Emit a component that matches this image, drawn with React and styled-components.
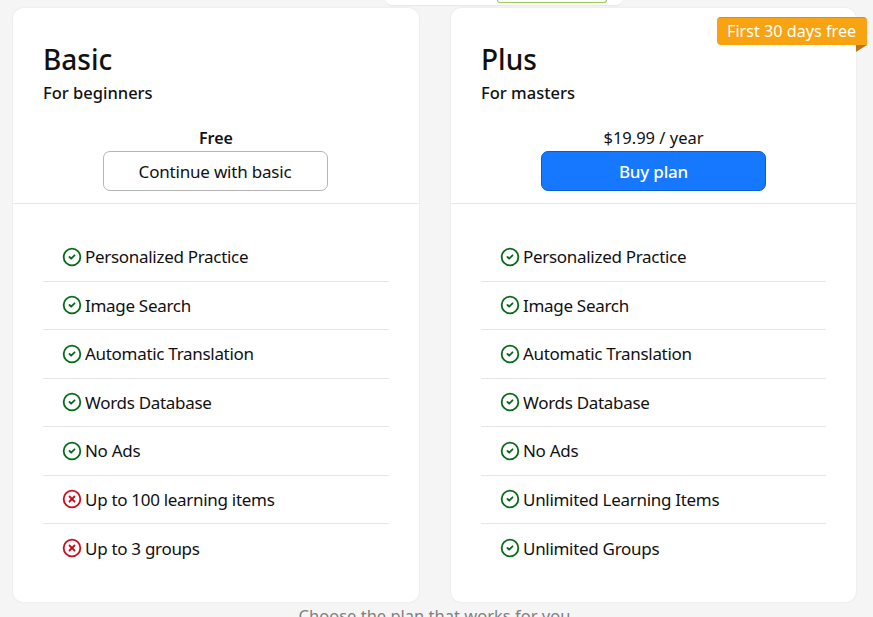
import React from "react";
import styled, { createGlobalStyle } from "styled-components";
import { CircleCheck, CircleX } from "lucide-react";

const plans = [
  {
    name: "Basic",
    tagline: "For beginners",
    price: "Free",
    strongPrice: true,
    action: "Continue with basic",
    features: [
      ["Personalized Practice", true],
      ["Image Search", true],
      ["Automatic Translation", true],
      ["Words Database", true],
      ["No Ads", true],
      ["Up to 100 learning items", false],
      ["Up to 3 groups", false],
    ],
  },
  {
    name: "Plus",
    tagline: "For masters",
    price: "$19.99 / year",
    action: "Buy plan",
    primary: true,
    badge: "First 30 days free",
    features: [
      ["Personalized Practice", true],
      ["Image Search", true],
      ["Automatic Translation", true],
      ["Words Database", true],
      ["No Ads", true],
      ["Unlimited Learning Items", true],
      ["Unlimited Groups", true],
    ],
  },
];

const App = () => {
  return (
    <Page>
      <GlobalStyle />
      <TopStrip>
        <TopTab />
      </TopStrip>
      <Cards>
        {plans.map((plan) => (
          <Card key={plan.name}>
            {plan.badge && (
              <Badge>
                {plan.badge}
                <Fold />
              </Badge>
            )}
            <CardHead>
              <Title>{plan.name}</Title>
              <Tagline>{plan.tagline}</Tagline>
              <Price $strong={plan.strongPrice}>{plan.price}</Price>
              <Action $primary={plan.primary}>{plan.action}</Action>
            </CardHead>
            <Features>
              {plan.features.map(([label, included]) => (
                <Feature key={label}>
                  <IconWrapper $included={included}>
                    {included ? (
                      <CircleCheck size={20} strokeWidth={2.2} />
                    ) : (
                      <CircleX size={20} strokeWidth={2.2} />
                    )}
                  </IconWrapper>
                  {label}
                </Feature>
              ))}
            </Features>
          </Card>
        ))}
      </Cards>
      <Footer>Choose the plan that works for you</Footer>
    </Page>
  );
};

const GlobalStyle = createGlobalStyle`
  html, body {
    margin: 0;
    height: 100%;
    overflow: hidden;
    background: #f5f5f5;
  }
`;
const Page = styled.div`
  height: 617px;
  overflow: hidden;
  font-family: "Noto Sans", "Open Sans", sans-serif;
  color: #111;
`;
const TopStrip = styled.div`
  width: 236px;
  height: 5px;
  margin-left: 386px;
  padding: 0 15px 0 111px;
  box-sizing: border-box;
  background: #fff;
  border-radius: 0 0 6px 6px;
  box-shadow: 0 1px 1px rgba(0, 0, 0, 0.06);
`;
const TopTab = styled.div`
  height: 2px;
  background: #fff;
  border: 1px solid #9ccb5a;
  border-top: 0;
  border-radius: 0 0 4px 4px;
`;
const Cards = styled.div`
  display: grid;
  grid-template-columns: 406px 405px;
  gap: 32px;
  margin: 3px 0 0 13px;
`;
const Card = styled.div`
  position: relative;
  height: 594px;
  box-sizing: border-box;
  background: #fff;
  border-radius: 10px;
  box-shadow: 0 0 2px rgba(0, 0, 0, 0.1);
`;
const Badge = styled.div`
  position: absolute;
  top: 9px;
  right: -11px;
  width: 150px;
  height: 28px;
  box-sizing: border-box;
  padding-left: 10px;
  background: #f8a312;
  border-top: 1px solid #d98f12;
  border-radius: 4px 4px 0 4px;
  color: #fff;
  font-size: 16.2px;
  line-height: 26px;
  white-space: nowrap;
`;
const Fold = styled.span`
  position: absolute;
  right: 0;
  bottom: -7px;
  border-top: 7px solid #b5791a;
  border-right: 11px solid transparent;
`;
const CardHead = styled.div`
  display: flex;
  flex-direction: column;
  height: 196px;
  box-sizing: border-box;
  padding: 32px 30px 0;
  border-bottom: 1px solid #e6e6e6;
`;
const Title = styled.div`
  font-size: 28px;
  line-height: 38px;
  font-weight: 500;
`;
const Tagline = styled.div`
  margin-top: 3px;
  font-size: 16.5px;
  line-height: 24px;
  font-weight: 500;
`;
const Price = styled.div`
  margin-top: 21px;
  text-align: center;
  font-size: ${(p) => (p.$strong ? "16px" : "16.5px")};
  line-height: 24px;
  font-weight: ${(p) => (p.$strong ? 600 : 400)};
`;
const Action = styled.button`
  align-self: center;
  width: 225px;
  height: 40px;
  margin: 1px ${(p) => (p.$primary ? 0 : "2px")} 0 0;
  padding: 0;
  border-radius: 7px;
  border: 1px solid ${(p) => (p.$primary ? "#0a5fd0" : "#b5b5b5")};
  background: ${(p) => (p.$primary ? "#1677ff" : "#fff")};
  color: ${(p) => (p.$primary ? "#fff" : "#111")};
  font-family: inherit;
  font-size: 17px;
  letter-spacing: -0.2px;
  font-weight: ${(p) => (p.$primary ? 500 : 400)};
`;
const Features = styled.ul`
  list-style: none;
  margin: 29px 30px 0;
  padding: 0;
`;
const Feature = styled.li`
  display: flex;
  align-items: center;
  gap: 3px;
  height: 48.5px;
  box-sizing: border-box;
  padding-left: 19px;
  border-bottom: 1px solid #e6e6e6;
  font-size: 17px;
  letter-spacing: -0.3px;
  &:last-child {
    border-bottom: 0;
  }
`;
const IconWrapper = styled.span`
  display: flex;
  color: ${(p) => (p.$included ? "#0b6b1d" : "#c80f1e")};
`;
const Footer = styled.div`
  margin: 3px 4px 0 0;
  text-align: center;
  font-size: 16.5px;
  line-height: 22px;
  color: #808080;
`;

export default App;
